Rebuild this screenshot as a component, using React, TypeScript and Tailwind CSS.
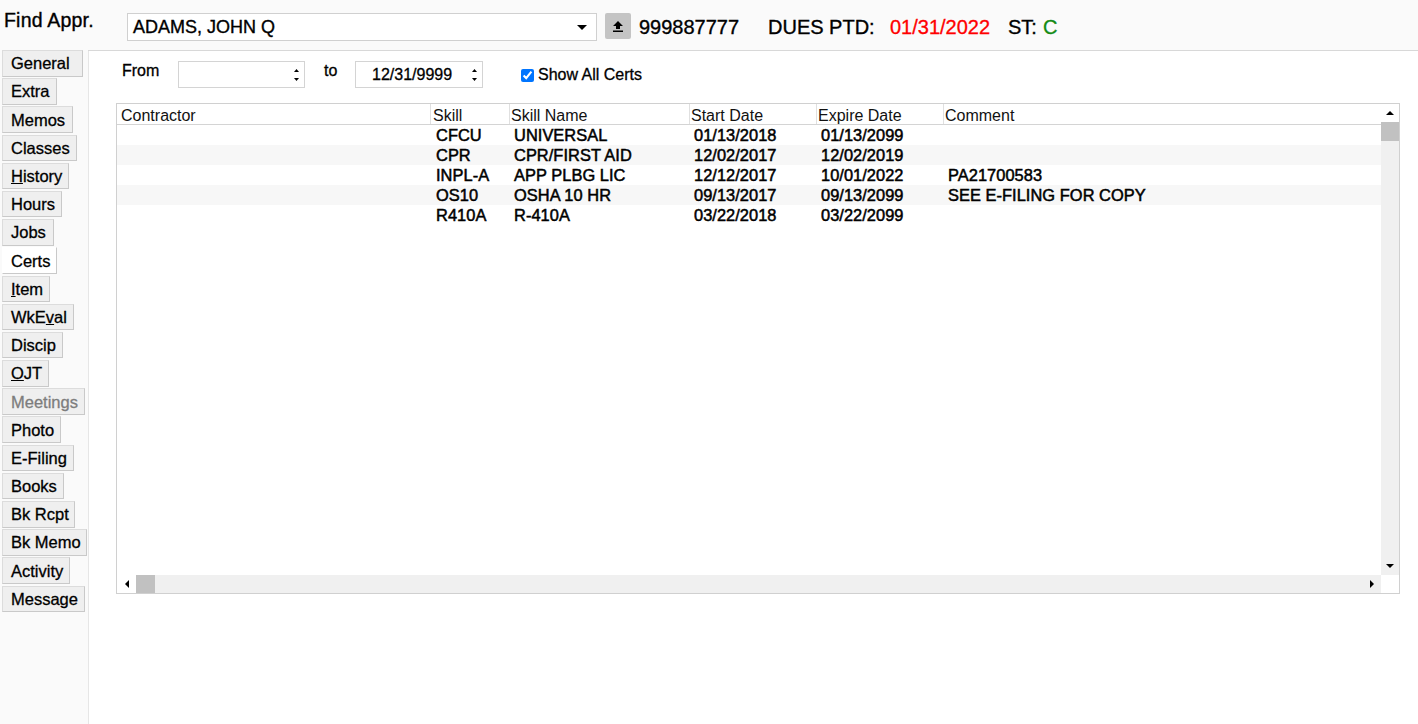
import React from "react";

const tabs: { label: React.ReactNode; w: number; active?: boolean; disabled?: boolean }[] = [
  { label: "General", w: 81 },
  { label: "Extra", w: 55 },
  { label: "Memos", w: 71 },
  { label: "Classes", w: 75 },
  { label: <><span className="underline">H</span>istory</>, w: 67 },
  { label: "Hours", w: 60 },
  { label: "Jobs", w: 52 },
  { label: "Certs", w: 55, active: true },
  { label: <><span className="underline">I</span>tem</>, w: 48 },
  { label: <>WkE<span className="underline">v</span>al</>, w: 72 },
  { label: "Discip", w: 61 },
  { label: <><span className="underline">O</span>JT</>, w: 47 },
  { label: "Meetings", w: 83, disabled: true },
  { label: "Photo", w: 59 },
  { label: "E-Filing", w: 72 },
  { label: "Books", w: 62 },
  { label: "Bk Rcpt", w: 73 },
  { label: "Bk Memo", w: 85 },
  { label: "Activity", w: 68 },
  { label: "Message", w: 83 },
];

const rows = [
  ["", "CFCU", "UNIVERSAL", "01/13/2018", "01/13/2099", ""],
  ["", "CPR", "CPR/FIRST AID", "12/02/2017", "12/02/2019", ""],
  ["", "INPL-A", "APP PLBG LIC", "12/12/2017", "10/01/2022", "PA21700583"],
  ["", "OS10", "OSHA 10 HR", "09/13/2017", "09/13/2099", "SEE E-FILING FOR COPY"],
  ["", "R410A", "R-410A", "03/22/2018", "03/22/2099", ""],
];

const Tri = ({ dir, w = 8, h = 5 }: { dir: "up" | "down" | "left" | "right"; w?: number; h?: number }) => {
  let pts = "";
  if (dir === "up") pts = `0,${h} ${w},${h} ${w / 2},0`;
  if (dir === "down") pts = `0,0 ${w},0 ${w / 2},${h}`;
  if (dir === "left") pts = `${w},0 ${w},${h} 0,${h / 2}`;
  if (dir === "right") pts = `0,0 0,${h} ${w},${h / 2}`;
  return (
    <svg width={w} height={h} viewBox={`0 0 ${w} ${h}`} className="block">
      <polygon points={pts} fill="#000" />
    </svg>
  );
};

const Spinner = () => (
  <div className="flex flex-col items-center gap-[6px]">
    <Tri dir="up" w={5} h={3} />
    <Tri dir="down" w={5} h={3} />
  </div>
);

export default function App() {
  return (
    <div
      className="w-[1418px] h-[724px] bg-[#fafafa] text-black flex flex-col overflow-hidden"
      style={{ fontFamily: '"Liberation Sans", Arial, sans-serif' }}
    >
      {/* Top bar */}
      <div className="h-[51px] shrink-0 border-b border-[#d8d8d8] flex items-start [-webkit-text-stroke:0.35px_#000]">
        <div className="w-[127px] pl-[4px] pt-[8px] text-[19.5px] leading-[24px] tracking-[0.2px]">Find Appr.</div>
        <div className="mt-[13px] w-[470px] h-[28px] border border-[#d0d0d0] bg-white flex items-center justify-between pl-[5px] pr-[9px]">
          <span className="text-[18px] leading-[22px]">ADAMS, JOHN Q</span>
          <Tri dir="down" w={10} h={5} />
        </div>
        <div className="mt-[13px] ml-[8px] w-[26px] h-[26px] bg-[#c4c4c4] rounded-[2px] flex items-center justify-center">
          <svg width="10" height="11" viewBox="0 0 10 11">
            <polygon points="5,0 10,5 7,5 7,8 3,8 3,5 0,5" fill="#000" />
            <rect x="0" y="9.5" width="10" height="1.5" fill="#000" />
          </svg>
        </div>
        <div className="mt-[14px] ml-[8px] text-[20px] leading-[26px] w-[129px]">999887777</div>
        <div className="mt-[14px] text-[20px] leading-[26px] w-[122px]">DUES PTD:</div>
        <div className="mt-[14px] text-[20px] leading-[26px] text-[#ff0000] w-[118px] [-webkit-text-stroke:0.3px_#ff0000]">01/31/2022</div>
        <div className="mt-[14px] text-[20px] leading-[26px]">ST:</div>
        <div className="mt-[14px] ml-[6px] text-[20px] leading-[26px] text-[#138a13] [-webkit-text-stroke:0.3px_#138a13]">C</div>
      </div>

      <div className="flex flex-1 min-h-0">
        {/* Left tabs */}
        <div className="w-[88px] shrink-0 bg-[#fafafa] pl-[2px] -mt-[1px] flex flex-col">
          {tabs.map((t, i) => (
            <div key={i} className="h-[28.2px] shrink-0">
              <div
                style={{ width: t.w }}
                className={`h-[26.5px] flex items-center pl-[8px] text-[16.5px] leading-[20px] border border-[#dcdcdc] border-r-[#c9c9c9] border-b-[#c9c9c9] ${
                  t.active ? "bg-white border-white" : "bg-[#efefef]"
                } ${
                  t.disabled
                    ? "text-[#7d7d7d] [-webkit-text-stroke:0.3px_#7d7d7d]"
                    : "text-black [-webkit-text-stroke:0.3px_#000]"
                }`}
              >
                {t.label}
              </div>
            </div>
          ))}
        </div>

        {/* Content */}
        <div className="flex-1 bg-white border-l border-[#e6e6e6] flex flex-col">
          <div className="flex items-start pl-[33px] pt-[10px] h-[52px] [-webkit-text-stroke:0.3px_#000]">
            <div className="text-[16px] leading-[20px] w-[56px]">From</div>
            <div className="w-[127px] h-[27px] border border-[#d4d4d4] bg-white flex items-center justify-end pr-[5px]">
              <Spinner />
            </div>
            <div className="ml-[19px] text-[16px] leading-[20px] w-[31px]">to</div>
            <div className="w-[128px] h-[27px] border border-[#d4d4d4] bg-white flex items-center justify-between pl-[16px] pr-[5px]">
              <span className="text-[16px] leading-[20px]">12/31/9999</span>
              <Spinner />
            </div>
            <div className="ml-[38px] mt-[4px] flex items-center">
              <input type="checkbox" checked readOnly className="w-[13px] h-[13px] m-0 accent-[#0075ff]" />
              <span className="ml-[4px] text-[16px] leading-[20px]">Show All Certs</span>
            </div>
          </div>

          {/* Grid */}
          <div className="ml-[27px] w-[1284px] h-[491px] border border-[#d0d0d0] flex flex-col">
            <div className="flex flex-1 min-h-0">
              <div className="flex-1 flex flex-col">
                <div className="h-[21px] border-b border-[#d4d4d4] flex text-[16px] leading-[19px] text-[#111]">
                  <div className="w-[313px] pl-[4px] pt-[2px]">Contractor</div>
                  <div className="w-[79px] pl-[2px] pt-[2px] border-l border-[#e0e0e0]">Skill</div>
                  <div className="w-[180px] pl-[1px] pt-[2px] border-l border-[#e0e0e0]">Skill Name</div>
                  <div className="w-[127px] pl-[1px] pt-[2px] border-l border-[#e0e0e0]">Start Date</div>
                  <div className="w-[127px] pl-[1px] pt-[2px] border-l border-[#e0e0e0]">Expire Date</div>
                  <div className="flex-1 pl-[1px] pt-[2px] border-l border-[#e0e0e0]">Comment</div>
                </div>
                {rows.map((r, i) => (
                  <div
                    key={i}
                    className={`h-[20px] flex text-[16.4px] leading-[20px] tracking-[0.05px] [-webkit-text-stroke:0.5px_#000] ${
                      i % 2 === 1 ? "bg-[#f7f7f7]" : "bg-white"
                    }`}
                  >
                    <div className="w-[313px] pl-[4px]">{r[0]}</div>
                    <div className="w-[79px] pl-[6px]">{r[1]}</div>
                    <div className="w-[180px] pl-[5px]">{r[2]}</div>
                    <div className="w-[127px] pl-[5px]">{r[3]}</div>
                    <div className="w-[127px] pl-[5px]">{r[4]}</div>
                    <div className="flex-1 pl-[5px]">{r[5]}</div>
                  </div>
                ))}
              </div>
              {/* vertical scrollbar */}
              <div className="w-[18px] flex flex-col bg-[#f0f0f0]">
                <div className="h-[18px] bg-white flex items-center justify-center">
                  <Tri dir="up" w={8} h={4} />
                </div>
                <div className="h-[19px] bg-[#c1c1c1]" />
                <div className="flex-1" />
                <div className="h-[18px] flex items-center justify-center">
                  <Tri dir="down" w={8} h={4} />
                </div>
              </div>
            </div>
            <div className="h-[18px] flex">
              <div className="flex-1 bg-[#f0f0f0] flex items-center">
                <div className="w-[19px] h-[18px] bg-white flex items-center justify-center">
                  <Tri dir="left" w={4} h={8} />
                </div>
                <div className="w-[19px] h-[18px] bg-[#c1c1c1]" />
                <div className="flex-1" />
                <div className="w-[18px] h-[18px] flex items-center justify-center">
                  <Tri dir="right" w={4} h={8} />
                </div>
              </div>
              <div className="w-[18px] bg-white" />
            </div>
          </div>
        </div>
      </div>
    </div>
  );
}
